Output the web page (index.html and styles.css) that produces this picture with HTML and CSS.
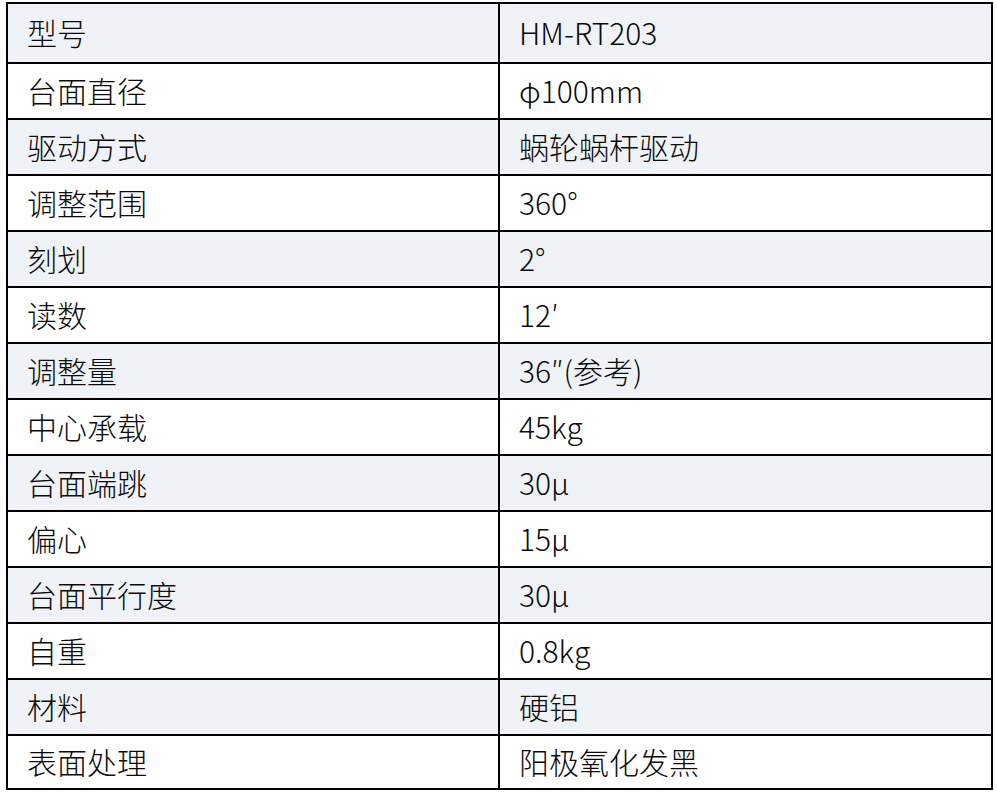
FILE: index.html
```html
<!DOCTYPE html>
<html lang="zh">
<head>
<meta charset="utf-8">
<link rel="stylesheet" href="styles.css">
</head>
<body>
<table class="spec">
  <tr class="first"><td>型号</td><td>HM-RT203</td></tr>
  <tr><td>台面直径</td><td>φ100mm</td></tr>
  <tr><td>驱动方式</td><td>蜗轮蜗杆驱动</td></tr>
  <tr><td>调整范围</td><td>360°</td></tr>
  <tr><td>刻划</td><td>2°</td></tr>
  <tr><td>读数</td><td>12′</td></tr>
  <tr><td>调整量</td><td>36″(参考)</td></tr>
  <tr><td>中心承载</td><td>45kg</td></tr>
  <tr><td>台面端跳</td><td>30μ</td></tr>
  <tr><td>偏心</td><td>15μ</td></tr>
  <tr><td>台面平行度</td><td>30μ</td></tr>
  <tr><td>自重</td><td>0.8kg</td></tr>
  <tr><td>材料</td><td>硬铝</td></tr>
  <tr class="last"><td>表面处理</td><td>阳极氧化发黑</td></tr>
</table>
</body>
</html>
```
FILE: styles.css
```css
html, body {
  margin: 0;
  padding: 0;
  background: #ffffff;
}
body {
  padding: 2px 0 0 6px;
  font-family: "Noto Sans CJK SC", "Noto Sans", sans-serif;
  color: #0a0a0a;
}
.spec {
  border-collapse: collapse;
  width: 987px;
  table-layout: fixed;
}
.spec td {
  border: 2px solid #000000;
  padding: 0 0 2px 19px;
  font-size: 30px;
  font-weight: 300;
  line-height: 1;
  vertical-align: middle;
  box-sizing: border-box;
  height: 56px;
}
.spec td:first-child {
  width: 492px;
}
.spec tr:nth-child(odd) td {
  background: #eff3f8;
}
.spec tr.first td {
  height: 60px;
}
.spec tr.last td {
  height: 54px;
}
```
